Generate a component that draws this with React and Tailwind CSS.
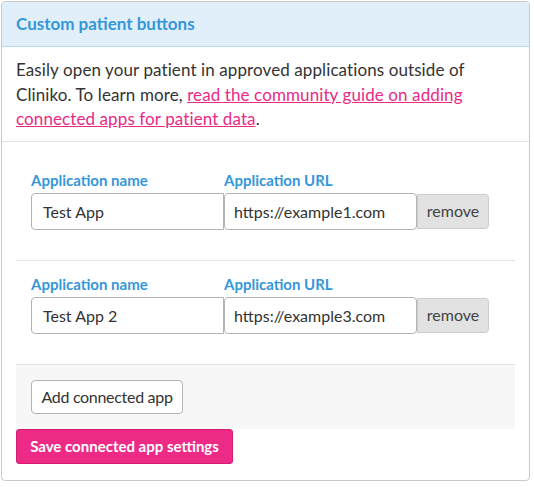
// Custom patient buttons settings card
const font = { fontFamily: 'Lato, "Open Sans", sans-serif' };

const apps = [
  { id: 1, name: 'Test App', url: 'https://example1.com' },
  { id: 2, name: 'Test App 2', url: 'https://example3.com' },
];

// One connected app row
function AppRow({ app, first }) {
  return (
    <div className={`pl-[15px] ${first ? 'pt-[13px]' : 'pt-[13px] border-t border-[#e3e3e3]'} pb-[30px]`}>
      <div className="flex">
        <div className="w-[193px]">
          <label className="block text-[15px] font-bold leading-[20px] text-[#3497db] mb-[3px]">
            Application name
          </label>
          <input
            type="text"
            defaultValue={app.name}
            className="block w-[193px] h-[37px] border border-[#b3b3b3] rounded-l-[4px] px-[11px] text-[16px] text-[#333] bg-white outline-none"
          />
        </div>
        <div className="w-[193px]">
          <label className="block text-[15px] font-bold leading-[20px] text-[#3497db] mb-[3px]">
            Application URL
          </label>
          <input
            type="text"
            defaultValue={app.url}
            className="block w-[193px] h-[37px] border border-[#b3b3b3] rounded-[4px] px-[9px] text-[16px] text-[#333] bg-white outline-none"
          />
        </div>
        <div className="pt-[24px]">
          <button className="h-[35px] w-[72px] bg-[#e2e2e2] border border-[#cccccc] rounded-r-[4px] text-[16px] text-[#444]">
            remove
          </button>
        </div>
      </div>
    </div>
  );
}

export default function App() {
  return (
    <div className="bg-white w-[534px] h-[487px] pt-px pl-px" style={font}>
      <div className="w-[529px] h-[480px] border border-[#c9c9c9] rounded-[4px] bg-white overflow-hidden">
        {/* Header */}
        <div className="h-[45px] bg-[#e1effa] border-b border-[#bcd6ea] flex items-center px-[14px]">
          <h2 className="text-[17px] font-bold text-[#3497db]">Custom patient buttons</h2>
        </div>

        {/* Intro */}
        <div className="px-[14px] pt-[11px] pb-[9px] border-b border-[#e3e3e3]">
          <p className="text-[17px] leading-[24.5px] text-[#333] tracking-[0.1px]">
            Easily open your patient in approved applications outside of Cliniko. To learn more,{' '}
            <a href="#" className="text-[#ea2a86] underline">
              read the community guide on adding connected apps for patient data
            </a>
            .
          </p>
        </div>

        {/* Connected apps */}
        <div className="px-[14px] pt-[15px]">
          {apps.map((app, i) => (
            <AppRow key={app.id} app={app} first={i === 0} />
          ))}
          <div className="bg-[#f7f7f7] border-t border-[#e3e3e3] rounded-b-[4px] p-[15px]">
            <button className="h-[34px] w-[152px] bg-white border border-[#b3b3b3] rounded-[4px] text-[16px] text-[#333] tracking-[-0.3px]">
              Add connected app
            </button>
          </div>
          <button className="h-[35px] w-[217px] bg-[#ee2a87] border border-[#d41c73] rounded-[3px] text-[15px] font-bold text-white">
            Save connected app settings
          </button>
        </div>
      </div>
    </div>
  );
}
